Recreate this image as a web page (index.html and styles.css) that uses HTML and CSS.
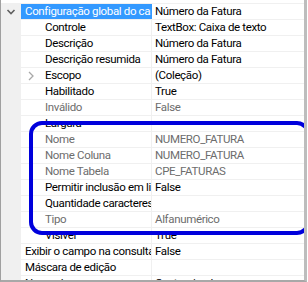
FILE: index.html
```html
<!DOCTYPE html>
<html lang="pt">
<head>
  <meta charset="UTF-8">
  <title>Propriedades</title>
  <link rel="stylesheet" href="styles.css">
</head>
<body>
  <div class="grid">
    <!-- category row (selected) -->
    <div class="row category selected">
      <div class="gutter">
        <svg class="chev" width="10" height="8" viewBox="0 0 10 8"><polyline points="1.5,2 5,5.5 8.5,2" /></svg>
      </div>
      <div class="label">Configuração global do campo</div>
      <div class="value">Número da Fatura</div>
    </div>
    <div class="row">
      <div class="gutter"></div>
      <div class="label">Controle</div>
      <div class="value">TextBox: Caixa de texto</div>
    </div>
    <div class="row">
      <div class="gutter"></div>
      <div class="label">Descrição</div>
      <div class="value">Número da Fatura</div>
    </div>
    <div class="row">
      <div class="gutter"></div>
      <div class="label">Descrição resumida</div>
      <div class="value">Número da Fatura</div>
    </div>
    <div class="row">
      <div class="gutter"></div>
      <div class="label">
        <svg class="expand" width="6" height="10" viewBox="0 0 6 10"><polyline points="1,1 5,5 1,9" /></svg>
        Escopo
      </div>
      <div class="value">(Coleção)</div>
    </div>
    <div class="row">
      <div class="gutter"></div>
      <div class="label">Habilitado</div>
      <div class="value">True</div>
    </div>
    <div class="row readonly">
      <div class="gutter"></div>
      <div class="label">Inválido</div>
      <div class="value">False</div>
    </div>
    <div class="row">
      <div class="gutter"></div>
      <div class="label">Largura</div>
      <div class="value"></div>
    </div>
    <div class="row readonly">
      <div class="gutter"></div>
      <div class="label">Nome</div>
      <div class="value">NUMERO_FATURA</div>
    </div>
    <div class="row readonly">
      <div class="gutter"></div>
      <div class="label">Nome Coluna</div>
      <div class="value">NUMERO_FATURA</div>
    </div>
    <div class="row readonly">
      <div class="gutter"></div>
      <div class="label">Nome Tabela</div>
      <div class="value">CPE_FATURAS</div>
    </div>
    <div class="row">
      <div class="gutter"></div>
      <div class="label">Permitir inclusão em lista</div>
      <div class="value">False</div>
    </div>
    <div class="row">
      <div class="gutter"></div>
      <div class="label">Quantidade caracteres</div>
      <div class="value"></div>
    </div>
    <div class="row readonly">
      <div class="gutter"></div>
      <div class="label">Tipo</div>
      <div class="value">Alfanumérico</div>
    </div>
    <div class="row">
      <div class="gutter"></div>
      <div class="label">Visível</div>
      <div class="value">True</div>
    </div>
    <div class="row outer">
      <div class="gutter"></div>
      <div class="label">Exibir o campo na consulta</div>
      <div class="value">False</div>
    </div>
    <div class="row outer">
      <div class="gutter"></div>
      <div class="label">Máscara de edição</div>
      <div class="value"></div>
    </div>
    <div class="row outer">
      <div class="gutter"></div>
      <div class="label">Nome do campo</div>
      <div class="value">Customizado</div>
    </div>

    <!-- annotation box drawn over the grid -->
    <div class="highlight"></div>
  </div>
</body>
</html>
```

FILE: styles.css
```css
* {
  margin: 0;
  padding: 0;
  box-sizing: border-box;
}

body {
  background-color: #fff;
  font-family: Roboto, "Noto Sans", Arial, sans-serif;
  font-size: 11.5px;
  letter-spacing: -0.35px;
  color: #000;
}

.grid {
  position: relative;
  width: 307px;
  height: 282px;
  padding-top: 3px;
  border-left: 1px solid #a0a0a0;
  border-right: 3px solid #bdbdbd;
  border-bottom: 2px solid #a8a8a8;
  overflow: hidden;
}

.row {
  display: flex;
  height: 16px;
  border-top: 1px solid #f0f0f0;
  line-height: 15px;
  white-space: nowrap;
}

.gutter {
  width: 20px;
  flex-shrink: 0;
  background-color: #f0f0f0;
  display: flex;
  align-items: center;
  justify-content: center;
}

.label {
  width: 131px;
  flex-shrink: 0;
  padding-left: 24px;
  overflow: hidden;
  border-right: 1px solid #f0f0f0;
  position: relative;
}

.value {
  flex: 1;
  padding-left: 3px;
  overflow: hidden;
}

.category .label {
  padding-left: 4px;
}

.selected .label {
  background-color: #3399ff;
  color: #fff;
  border-right-color: #3399ff;
}

.outer .label {
  padding-left: 4px;
}

.readonly {
  color: #6d6d6d;
}

.chev polyline {
  fill: none;
  stroke: #606060;
  stroke-width: 1.6;
}

.expand {
  position: absolute;
  left: 7px;
  top: 3px;
}

.expand polyline {
  fill: none;
  stroke: #a8a8a8;
  stroke-width: 1.3;
}

.highlight {
  position: absolute;
  left: 28px;
  top: 121px;
  width: 281px;
  height: 114px;
  border: 4px solid #0000dc;
  border-radius: 13px;
}
```
